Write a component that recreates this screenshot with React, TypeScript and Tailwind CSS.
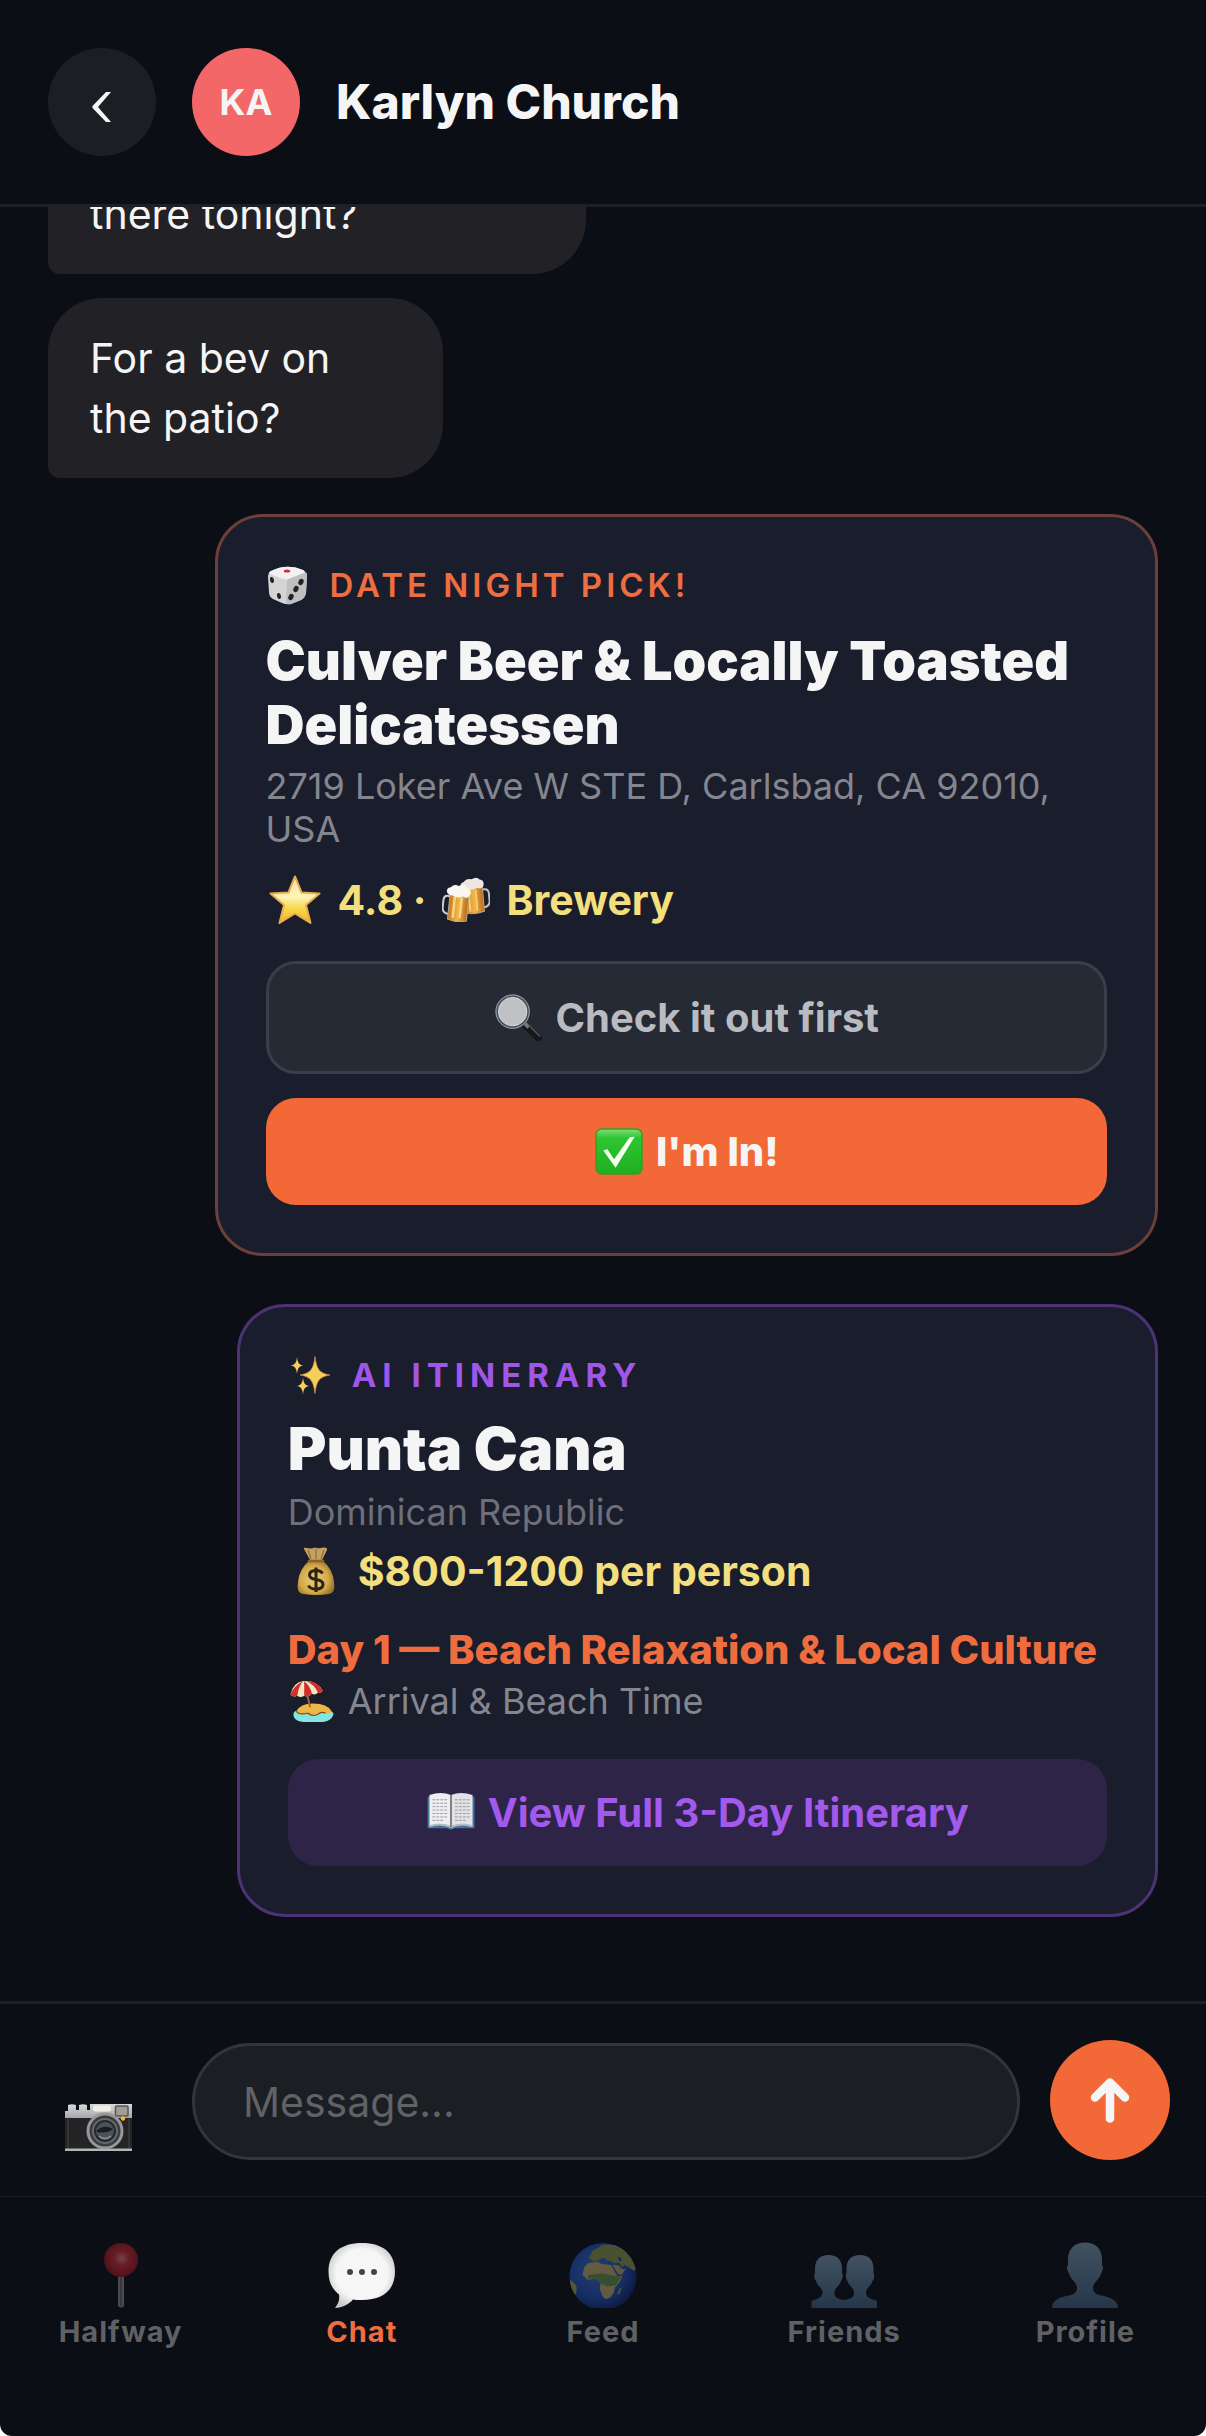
import type { ReactNode } from "react";

type IconProps = { className?: string };

const PERSON =
  "M34 0.5C44.500 0.500 51 7 51 17.500L51 23C53 25 51.500 29 50 31.500C49 37 42 40.500 42 45.500C42 51 45 52 50 53.500C58 55 67 57.500 67 66H1C1 57.500 10 55 18 53.500C23 52 26 51 26 45.500C26 40.500 19 37 18 31.500C16.500 29 15 25 17 23L17 17.500C17 7 23.500 0.500 34 0.500Z";

const FRIEND =
  "M0 0C9 0 13.500 5 13.500 14V18C15 20 14 24 12.500 26C12 30 6 33 6 37C6 42 8 43.500 13 44.500C22 46 30 47 30 53H-17V46C-9 43.500 -6 42 -6 37C-6 33 -12 30 -12.500 26C-14 24 -15 20 -13.500 18V14C-13.500 5 -9 0 0 0Z";

const SPARK = "M0 -1C.1 -.3 .3 -.1 1 0C.3 .1 .1 .3 0 1C-.1 .3 -.3 .1 -1 0C-.3 -.1 -.1 -.3 0 -1Z";

function DiceIcon({ className }: IconProps) {
  return (
    <svg className={className} viewBox="0 0 42 40" aria-hidden="true">
      <path d="M4 6Q20 -2 36 5Q40 7 40 12L39 28Q38 33 34 35L24 39Q20 40 15 38L6 34Q2 32 2 27L1 12Q1 8 4 6Z" fill="#d4d4d6" />
      <path d="M4 6Q20 -2 36 5Q39 7 35 9L22 14Q18 15 13 13L3 9Q1 7 4 6Z" fill="#f1f1f2" />
      <path d="M40 9L39 28Q38 33 34 35L24 39Q20 40 19 37L20 17Q20 14 24 13L37 8Q40 7 40 9Z" fill="#bfbfc2" />
      <ellipse cx="20" cy="6" rx="3.200" ry="1.500" fill="#d62b33" />
      <ellipse cx="5" cy="15" rx="1.900" ry="3" fill="#222" transform="rotate(-12 5 15)" />
      <ellipse cx="12" cy="31" rx="1.900" ry="3" fill="#222" transform="rotate(-12 12 31)" />
      <ellipse cx="34" cy="17" rx="2.500" ry="3.200" fill="#222" transform="rotate(25 34 17)" />
      <ellipse cx="29" cy="24" rx="2.500" ry="3.200" fill="#222" transform="rotate(25 29 24)" />
      <ellipse cx="24" cy="32" rx="2.500" ry="3.200" fill="#222" transform="rotate(25 24 32)" />
    </svg>
  );
}

function StarIcon({ className }: IconProps) {
  return (
    <svg className={className} viewBox="0 0 54 50" aria-hidden="true">
      <defs>
        <linearGradient id="star" x1="0" y1="0" x2="0" y2="1">
          <stop offset="0" stopColor="#fbe7b0" />
          <stop offset="0.45" stopColor="#fdf3b4" />
          <stop offset="0.7" stopColor="#f8d548" />
          <stop offset="1" stopColor="#efb72d" />
        </linearGradient>
      </defs>
      <path
        d="M28 1.500L34.500 17.500L52.500 18.500L39 30L43.500 48L28 38.500L12.500 48L17 30L3.500 18.500L21.500 17.500Z"
        fill="url(#star)"
        stroke="#e6ad51"
        strokeWidth="2"
        strokeLinejoin="round"
      />
    </svg>
  );
}

function BeersIcon({ className }: IconProps) {
  return (
    <svg className={className} viewBox="0 0 48 46" aria-hidden="true">
      <defs>
        <linearGradient id="beer" x1="0" y1="0" x2="1" y2="0">
          <stop offset="0" stopColor="#c9791c" />
          <stop offset="0.5" stopColor="#f2b548" />
          <stop offset="1" stopColor="#b86a1a" />
        </linearGradient>
      </defs>
      <g transform="rotate(-5 34 18)">
        <path d="M40 13h3q4 0 4 5v7q0 5-6 6" fill="none" stroke="#c5c1bd" strokeWidth="2" />
        <path d="M22 9H41V35Q31 38 22 35Z" fill="url(#beer)" stroke="#b9a78c" strokeWidth="1" />
        <path d="M27 13V34M34 13V34" stroke="#f8cd70" strokeWidth="2" />
        <path d="M20 10Q18 5 23 4Q26 0 31 2Q36 -1 39 3Q44 4 42 10Q40 13 36 11Q30 14 26 11Q22 13 20 10Z" fill="#eee7e0" />
      </g>
      <g transform="rotate(6 16 28)">
        <path d="M8 20H5q-4 0-4 5v7q0 5 6 6" fill="none" stroke="#d3cfcb" strokeWidth="2" />
        <path d="M7 15H26V43Q16 46 7 43Z" fill="url(#beer)" stroke="#b9a78c" strokeWidth="1" />
        <path d="M12 20V41M19 20V41" stroke="#fbd682" strokeWidth="2.500" />
        <path d="M4 17Q2 12 7 11Q10 7 15 9Q20 6 24 10Q29 12 27 17Q25 22 20 19Q14 22 10 19Q6 20 4 17Z" fill="#fbf6f1" />
      </g>
    </svg>
  );
}

function SearchIcon({ className }: IconProps) {
  return (
    <svg className={className} viewBox="0 0 50 48" aria-hidden="true">
      <path d="M31 32L45 45" stroke="#17181a" strokeWidth="7" strokeLinecap="round" />
      <path d="M30 29L35 34" stroke="#77797d" strokeWidth="4" />
      <path d="M35 32L46 43" stroke="#55575b" strokeWidth="1.500" strokeLinecap="round" />
      <circle cx="18.500" cy="18" r="16" fill="#bfc1c5" stroke="#4c5159" strokeWidth="3.500" />
      <circle cx="18.500" cy="18" r="17" fill="none" stroke="#9aa5b3" strokeWidth="1" />
      <circle cx="18.500" cy="18" r="14.500" fill="none" stroke="#e2e3e6" strokeWidth="1" />
    </svg>
  );
}

function CheckIcon({ className }: IconProps) {
  return (
    <svg className={className} viewBox="0 0 50 48" aria-hidden="true">
      <defs>
        <linearGradient id="check" x1="0" y1="0" x2="0" y2="1">
          <stop offset="0" stopColor="#7ee27b" />
          <stop offset="0.2" stopColor="#2fc531" />
          <stop offset="1" stopColor="#1fae20" />
        </linearGradient>
      </defs>
      <rect x="1.500" y="1" width="47" height="46" rx="6" fill="url(#check)" stroke="#3f9a22" strokeWidth="1.500" />
      <path d="M9 23L13 21.500L20 32L36 9.500L41 9L21.500 40.500Z" fill="#f6fff4" />
    </svg>
  );
}

function SparklesIcon({ className }: IconProps) {
  return (
    <svg className={className} viewBox="0 0 44 40" aria-hidden="true">
      <g fill="#f5cf5a">
        <path d={SPARK} transform="translate(27 20) scale(15 18.500)" stroke="#d98f4a" strokeWidth="0.040" />
        <path d={SPARK} transform="translate(9 10.500) scale(6.500 8.500)" />
        <path d={SPARK} transform="translate(15 31) scale(6.500 8.500)" />
      </g>
    </svg>
  );
}

function MoneyIcon({ className }: IconProps) {
  return (
    <svg className={className} viewBox="0 0 58 50" aria-hidden="true">
      <defs>
        <radialGradient id="bag" cx="0.45" cy="0.55" r="0.6">
          <stop offset="0" stopColor="#f0d077" />
          <stop offset="0.65" stopColor="#d3a848" />
          <stop offset="1" stopColor="#8f6c2c" />
        </radialGradient>
      </defs>
      <path d="M22 14L16 3Q15 1 19 2Q23 3 27 1.500Q31 3 35 1.500Q40 1 39 4L34 14Z" fill="#c4a062" />
      <path d="M23 13L20 4M28 13V3M33 13L36 4" stroke="#8e7039" strokeWidth="1.200" />
      <path d="M22 14H34Q45 23 46 36Q48 47 41 48Q28 50 15 48Q8 47 10 36Q11 23 22 14Z" fill="url(#bag)" />
      <path d="M21 15H35" stroke="#8a6327" strokeWidth="2.500" strokeLinecap="round" />
      <path
        d="M34.500 27.500Q33 24.500 28 24.500Q21.500 24.500 21.500 29Q21.500 32.500 28 33.500Q35 34.500 35 38.500Q35 43 28 43Q22 43 20.500 39.500M28 21.500V46"
        fill="none"
        stroke="#2b2415"
        strokeWidth="3"
      />
    </svg>
  );
}

function BeachIcon({ className }: IconProps) {
  return (
    <svg className={className} viewBox="0 0 48 44" aria-hidden="true">
      <path d="M5 35Q5 43 18 43H32Q45 43 46 34Q44 31 38 31H12Q5 31 5 35Z" fill="#83e6e2" />
      <path d="M8 32Q12 24 25 24Q40 24 44 32Q44 35 38 34Q34 32 30 35Q24 38 20 34Q8 37 8 32Z" fill="#edb746" />
      <path d="M8 32Q10 36 20 34Q24 38 30 35Q34 32 38 34" fill="none" stroke="#7a4a22" strokeWidth="1.200" />
      <path d="M17 5L22 28" stroke="#a7623a" strokeWidth="2" />
      <path d="M2 15Q4 3 15 1Q29 0 35 11Q33 14 30 13Q27 16 24 14Q20 18 16 16Q12 19 9 16Q5 18 2 15Z" fill="#f5e6c2" />
      <path d="M15 1Q5 6 2 15Q5 18 9 16Q10 7 15 1Z" fill="#cf2f2d" />
      <path d="M16 1Q16 8 16 16Q20 18 24 14Q22 6 16 1Z" fill="#cf2f2d" />
      <path d="M18 1Q27 5 30 13Q33 14 35 11Q30 1 18 1Z" fill="#cf2f2d" />
    </svg>
  );
}

function BookIcon({ className }: IconProps) {
  return (
    <svg className={className} viewBox="0 0 50 48" aria-hidden="true">
      <path d="M1 8H49V40H29Q25 43 21 40H1Z" fill="#41749b" />
      <path d="M3 6Q15 2 25 6V38Q15 34 3 38Z" fill="#f0eff0" />
      <path d="M47 6Q35 2 25 6V38Q35 34 47 38Z" fill="#e3e2e6" />
      <path d="M3 38Q15 34 25 39Q35 34 47 38" fill="none" stroke="#b9bac4" strokeWidth="2" />
      <path d="M25 6V39" stroke="#7f7f88" strokeWidth="2" />
      <g stroke="#9b9aa3" strokeWidth="1" strokeDasharray="3 1">
        <path d="M6 11H21M6 14.500H21M6 18H21M6 21.500H21M6 25H21M6 28.500H21M6 32H18" />
        <path d="M29 11H44M29 14.500H44M29 18H44M29 21.500H44M29 25H44M29 28.500H44M29 32H41" />
      </g>
    </svg>
  );
}

function CameraIcon({ className }: IconProps) {
  return (
    <svg className={className} viewBox="0 0 68 48" aria-hidden="true">
      <defs>
        <linearGradient id="cam" x1="0" y1="0" x2="0" y2="1">
          <stop offset="0" stopColor="#d7d8da" />
          <stop offset="1" stopColor="#a2a4a7" />
        </linearGradient>
      </defs>
      <path d="M0 7H3V1Q7 -0.500 11 1V6H14V1Q18 -0.500 22 1V6H25V0H67V15H0Z" fill="url(#cam)" />
      <rect x="0" y="14" width="67" height="31" fill="#242425" />
      <path d="M3 15V44M64 15V44" stroke="#49494b" strokeWidth="1" />
      <rect x="0" y="44.500" width="67" height="2.500" fill="#b4b5b7" />
      <rect x="28" y="1.500" width="18" height="6" rx="2.500" fill="#f1f0e8" />
      <rect x="50.500" y="2" width="12.500" height="10" rx="1" fill="#a39b94" stroke="#595653" strokeWidth="1.500" />
      <circle cx="58" cy="14.500" r="2.200" fill="#efb93a" />
      <circle cx="40" cy="27" r="17" fill="#3b3c3e" stroke="#96989b" strokeWidth="3" />
      <circle cx="40" cy="27" r="12" fill="#26292c" stroke="#66696d" strokeWidth="2" />
      <circle cx="40" cy="27" r="9" fill="#4b535a" />
      <path d="M32 26Q40 20 48 25Q42 30 32 28Z" fill="#1b1e21" />
      <path d="M34 32Q40 37 46 32" fill="none" stroke="#8b959d" strokeWidth="1.500" />
    </svg>
  );
}

function PinIcon({ className }: IconProps) {
  return (
    <svg className={className} viewBox="0 0 68 66" aria-hidden="true">
      <defs>
        <radialGradient id="pin" cx="0.52" cy="0.45" r="0.55">
          <stop offset="0" stopColor="#f08a84" />
          <stop offset="0.4" stopColor="#d5303a" />
          <stop offset="1" stopColor="#a3161f" />
        </radialGradient>
      </defs>
      <path d="M31 32H37V64Q34 67 31 64Z" fill="#98959a" />
      <path d="M34 32V64" stroke="#5c5a60" strokeWidth="1.500" />
      <circle cx="34" cy="18" r="17" fill="url(#pin)" />
    </svg>
  );
}

function BubbleIcon({ className }: IconProps) {
  return (
    <svg className={className} viewBox="0 0 68 66" aria-hidden="true">
      <defs>
        <radialGradient id="bubble" cx="0.5" cy="0.48" r="0.55">
          <stop offset="0.7" stopColor="#f6f6f6" />
          <stop offset="1" stopColor="#c9c9c9" />
        </radialGradient>
      </defs>
      <path
        d="M34 1C55 1 67 11 67 29.500C67 48 55 58 34 58C30 58 27 58 25 57.500C21 62 14 66 7 66C10 62 12 58 11 52.500C4 47 0.500 40 0.500 29.500C0.500 11 13 1 34 1Z"
        fill="url(#bubble)"
      />
      <g fill="#444">
        <circle cx="22" cy="30" r="3" />
        <circle cx="34" cy="30" r="3" />
        <circle cx="46" cy="30" r="3" />
      </g>
    </svg>
  );
}

function GlobeIcon({ className }: IconProps) {
  return (
    <svg className={className} viewBox="0 0 68 66" aria-hidden="true">
      <defs>
        <radialGradient id="sea" cx="0.4" cy="0.4" r="0.62">
          <stop offset="0" stopColor="#3c78dc" />
          <stop offset="0.7" stopColor="#2453c4" />
          <stop offset="1" stopColor="#142c80" />
        </radialGradient>
        <clipPath id="world">
          <circle cx="34" cy="34.500" r="33.500" />
        </clipPath>
      </defs>
      <circle cx="34" cy="34.500" r="33.500" fill="url(#sea)" />
      <g clipPath="url(#world)">
        <g transform="translate(-8.500 -12) scale(0.333)">
          <path
            d="M84 84L92 72L96 62L112 54L126 44L150 44L180 46L210 70L232 112L220 122L204 112L192 104L186 112L176 98L162 100L150 92L140 92L132 84L120 86L112 92L98 94L92 88Z"
            fill="#93a552"
          />
          <path d="M156 104L174 106L186 118L196 116L184 134L174 134L164 118Z" fill="#c9b06a" />
          <path
            d="M72 110L84 99L110 95L124 102L152 105L160 120L170 138L186 138L178 156L164 172L160 188L150 202L136 208L126 198L118 178L120 160L108 146L82 150L66 134Z"
            fill="#cfb877"
          />
          <path d="M82 136L120 130L168 138L184 140L166 166L140 170L120 160L108 146L84 150Z" fill="#6f9c52" />
          <path d="M176 176L184 174L178 192L170 194Z" fill="#8ea453" />
          <path d="M24 148L38 156L48 168L48 186L40 202L24 190Z" fill="#b9aa55" />
          <path d="M172 80L182 84L184 94L176 92Z" fill="#2453c4" />
        </g>
      </g>
    </svg>
  );
}

function FriendsIcon({ className }: IconProps) {
  return (
    <svg className={className} viewBox="0 0 68 66" aria-hidden="true">
      <defs>
        <linearGradient id="friends" x1="0" y1="0" x2="0" y2="1">
          <stop offset="0" stopColor="#85a6c0" />
          <stop offset="1" stopColor="#446789" />
        </linearGradient>
      </defs>
      <path d={FRIEND} transform="translate(50 13) scale(-1 1)" fill="url(#friends)" />
      <path d={FRIEND} transform="translate(18.500 13)" fill="url(#friends)" />
    </svg>
  );
}

function ProfileIcon({ className }: IconProps) {
  return (
    <svg className={className} viewBox="0 0 68 66" aria-hidden="true">
      <defs>
        <linearGradient id="profile" x1="0" y1="0" x2="0" y2="1">
          <stop offset="0" stopColor="#85a6c0" />
          <stop offset="1" stopColor="#446789" />
        </linearGradient>
      </defs>
      <path d={PERSON} fill="url(#profile)" />
    </svg>
  );
}

const tabs = [
  { label: "Halfway", Icon: PinIcon },
  { label: "Chat", Icon: BubbleIcon, active: true },
  { label: "Feed", Icon: GlobeIcon },
  { label: "Friends", Icon: FriendsIcon },
  { label: "Profile", Icon: ProfileIcon },
];

function Header() {
  return (
    <header className="flex shrink-0 items-center gap-9 border-b-3 border-[#1d2026] p-12">
      <button type="button" aria-label="Back" className="size-[108px] rounded-full bg-[#1b1e22]">
        <svg viewBox="0 0 108 108" aria-hidden="true">
          <path d="M58 44H63L50 59L63 74H58L44.500 60V58Z" fill="#f5f5f5" />
        </svg>
      </button>
      <div className="flex size-[108px] items-center justify-center rounded-full bg-[#f46769] text-[36px] font-bold">
        KA
      </div>
      <h1 className="text-[48px] font-extrabold">Karlyn Church</h1>
    </header>
  );
}

function Bubble({ className, children }: { className: string; children: ReactNode }) {
  return (
    <div
      className={`${className} flex shrink-0 items-end rounded-[54px] rounded-bl-[12px] bg-[#212126] px-[42px] py-[30px] text-[41px] leading-[60px]`}
    >
      <p>{children}</p>
    </div>
  );
}

function DateCard() {
  return (
    <article className="mt-3 w-[85%] shrink-0 self-end rounded-[48px] border-3 border-[#6c4038] bg-[#1a1d2b] p-12">
      <div className="flex items-center gap-5 text-[33px] leading-[40px] font-semibold tracking-[4px] text-[#ee6d41]">
        <DiceIcon className="h-10 w-11" />
        DATE NIGHT PICK!
      </div>
      <h2 className="mt-6 text-[54px] leading-[64px] font-black">Culver Beer &amp; Locally Toasted Delicatessen</h2>
      <p className="mt-2 text-[36px] leading-[43px] text-[#84868f]">2719 Loker Ave W STE D, Carlsbad, CA 92010, USA</p>
      <p className="mt-6 flex items-center gap-4 text-[41px] leading-[50px] font-bold text-[#f3df7e]">
        <StarIcon className="h-[50px] w-14" />
        <span>4.8 ·</span>
        <BeersIcon className="h-[46px] w-12" />
        <span>Brewery</span>
      </p>
      <div className="mt-9 flex flex-col gap-6 text-[40px] leading-[47px]">
        <button
          type="button"
          className="flex items-center justify-center gap-3 rounded-[30px] border-3 border-[#3a3d4a] bg-[#252a35] py-[30px] font-bold text-[#babbc0]"
        >
          <SearchIcon className="h-[47px] w-[50px]" />
          Check it out first
        </button>
        <button
          type="button"
          className="flex items-center justify-center gap-3 rounded-[30px] bg-[#f26937] py-[30px] font-extrabold"
        >
          <CheckIcon className="h-[47px] w-[50px]" />
          I'm In!
        </button>
      </div>
    </article>
  );
}

function ItineraryCard() {
  return (
    <article className="mt-6 w-[83%] shrink-0 self-end rounded-[48px] border-3 border-[#4d3275] bg-[#1a1d2b] p-12">
      <div className="flex items-center gap-5 text-[33px] leading-[40px] font-bold tracking-[6px] text-[#a057e8]">
        <SparklesIcon className="h-10 w-11" />
        AI ITINERARY
      </div>
      <h2 className="mt-[18px] text-[59px] leading-[72px] font-black">Punta Cana</h2>
      <p className="mt-[6px] text-[36px] leading-[43px] text-[#6d6f79]">Dominican Republic</p>
      <p className="mt-3 flex items-center gap-3 text-[41px] leading-[50px] font-bold text-[#f3df7e]">
        <MoneyIcon className="h-[50px] w-[58px]" />
        $800-1200 per person
      </p>
      <h3 className="mt-[30px] text-[40px] leading-[48px] font-extrabold whitespace-nowrap text-[#ef6c3f]">
        Day 1 — Beach Relaxation &amp; Local Culture
      </h3>
      <p className="mt-[6px] flex items-center gap-3 text-[36px] leading-[43px] text-[#84868f]">
        <BeachIcon className="h-[43px] w-12" />
        Arrival &amp; Beach Time
      </p>
      <button
        type="button"
        className="mt-9 flex w-full items-center justify-center gap-3 rounded-[30px] bg-[#2d2448] py-[30px] text-[40px] leading-[47px] font-bold text-[#a259ec]"
      >
        <BookIcon className="h-[47px] w-[50px]" />
        View Full 3-Day Itinerary
      </button>
    </article>
  );
}

function Composer() {
  return (
    <form className="flex shrink-0 items-end gap-[30px] border-t-3 border-[#1d2026] p-9">
      <button type="button" aria-label="Add photo" className="flex h-16 w-[126px] items-center justify-center">
        <CameraIcon className="w-[68px]" />
      </button>
      <input
        type="text"
        aria-label="Message"
        placeholder="Message..."
        className="h-[117px] min-w-0 flex-1 rounded-full border-3 border-[#323539] bg-[#1b1e22] px-12 text-[41px] outline-none placeholder:text-[#606266]"
      />
      <button
        type="button"
        aria-label="Send"
        className="flex size-[120px] shrink-0 items-center justify-center rounded-full bg-[#f26937]"
      >
        <svg className="size-12" viewBox="0 0 48 48" aria-hidden="true">
          <path
            d="M24 42.500V7M9 21.500L24 6.500L39 21.500"
            fill="none"
            stroke="#f5f5f5"
            strokeWidth="8.500"
            strokeLinecap="round"
            strokeLinejoin="round"
          />
        </svg>
      </button>
    </form>
  );
}

function TabBar() {
  return (
    <nav className="grid shrink-0 grid-cols-5 border-t border-[#1a1d24] pt-[45px] pb-[86px]">
      {tabs.map(({ label, Icon, active }) => (
        <a
          key={label}
          href={`#${label.toLowerCase()}`}
          className={`flex flex-col items-center gap-[6px] text-[29px] leading-[36px] font-bold tracking-[1px] ${
            active ? "text-[#ee6d41]" : "text-[#606165]"
          }`}
        >
          <Icon className={active ? "h-[66px] w-[68px]" : "h-[66px] w-[68px] opacity-45"} />
          {label}
        </a>
      ))}
    </nav>
  );
}

export default function App() {
  return (
    <div className="bg-white">
      <div className="flex h-screen flex-col overflow-hidden rounded-b-[12px] bg-[#0b0e15] font-['Inter',sans-serif] text-[#f5f5f5]">
        <Header />
        <main className="flex min-h-0 flex-1 flex-col justify-end gap-6 overflow-hidden px-12 pb-[84px]">
          <Bubble className="h-[180px] w-[538px]">there tonight?</Bubble>
          <Bubble className="w-[395px]">
            For a bev on
            <br />
            the patio?
          </Bubble>
          <DateCard />
          <ItineraryCard />
        </main>
        <Composer />
        <TabBar />
      </div>
    </div>
  );
}
